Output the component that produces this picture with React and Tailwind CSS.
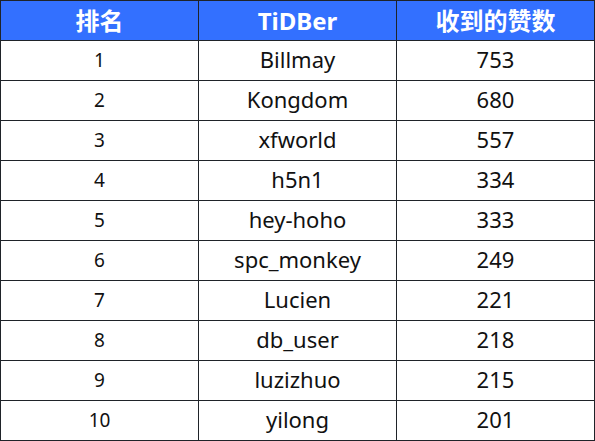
const rows = [
  ['1', 'Billmay', '753'],
  ['2', 'Kongdom', '680'],
  ['3', 'xfworld', '557'],
  ['4', 'h5n1', '334'],
  ['5', 'hey-hoho', '333'],
  ['6', 'spc_monkey', '249'],
  ['7', 'Lucien', '221'],
  ['8', 'db_user', '218'],
  ['9', 'luzizhuo', '215'],
  ['10', 'yilong', '201'],
]

export default function App() {
  return (
    <div className="w-[595px] h-[441px] bg-white font-['Noto_Sans','Noto_Sans_CJK_SC',sans-serif]">
      <table className="w-[595px] table-fixed border-collapse">
        <thead>
          <tr className="h-[40px] bg-[#3370ff] text-white">
            <th className="w-[198px] border border-[#1f2329] text-[24px] font-bold leading-none">排名</th>
            <th className="w-[198px] border border-[#1f2329] text-[24px] font-bold leading-none">TiDBer</th>
            <th className="border border-[#1f2329] text-[24px] font-bold leading-none">收到的赞数</th>
          </tr>
        </thead>
        <tbody>
          {rows.map((r) => (
            <tr key={r[0]} className="h-[40px] text-[#111]">
              <td className="border border-[#1f2329] text-center text-[19px] leading-none">{r[0]}</td>
              <td className="border border-[#1f2329] pb-[3px] text-center text-[22px] leading-none">{r[1]}</td>
              <td className="border border-[#1f2329] pb-[3px] text-center text-[22px] leading-none">{r[2]}</td>
            </tr>
          ))}
        </tbody>
      </table>
    </div>
  )
}
